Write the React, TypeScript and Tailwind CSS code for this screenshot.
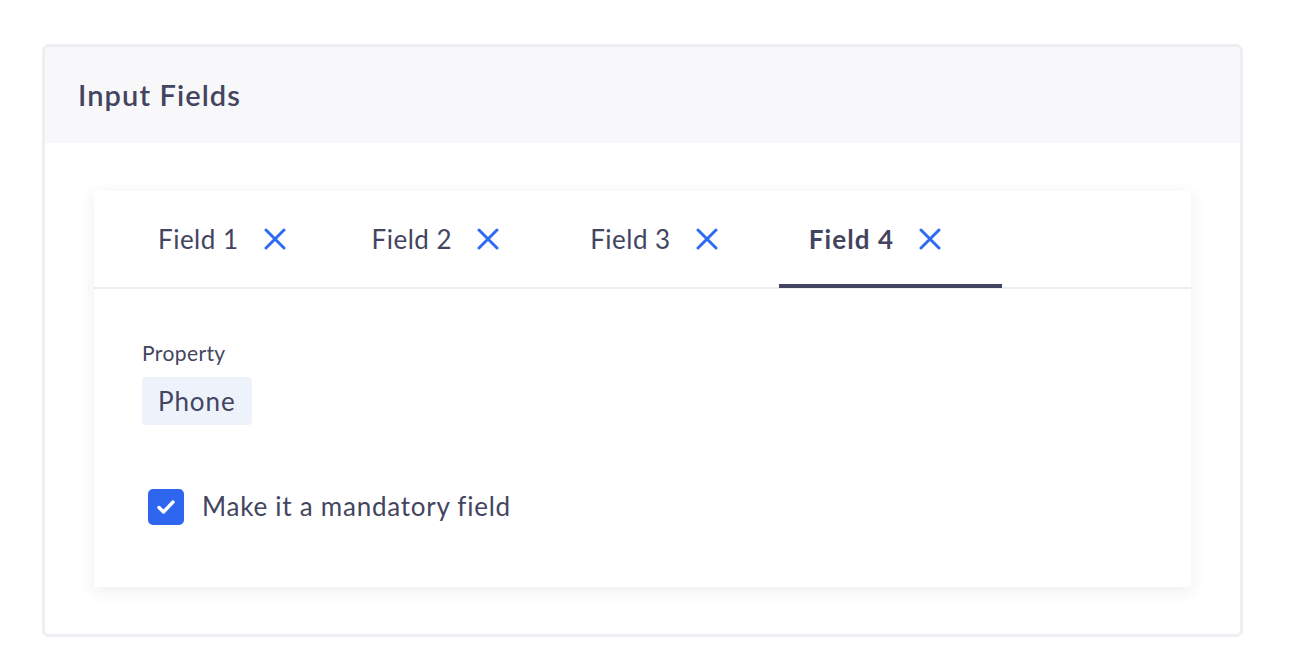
import React from 'react';

/* Input Fields — tabbed field editor card */

const tabs = ['Field 1', 'Field 2', 'Field 3', 'Field 4'];

function CloseIcon() {
  return (
    <svg width="22" height="22" viewBox="0 0 22 22" fill="none" className="shrink-0">
      <path d="M2 2L20 20M20 2L2 20" stroke="#2f6bf2" strokeWidth="3" strokeLinecap="round" />
    </svg>
  );
}

export default function App() {
  const active = 3;

  return (
    <div
      className="min-h-screen bg-white pt-[44px] pl-[42px]"
      style={{ fontFamily: 'Lato, "Open Sans", sans-serif' }}
    >
      <div className="w-[1201px] h-[593px] rounded-[7px] border-[3px] border-[#eeeff3] bg-white overflow-hidden">
        {/* header */}
        <div className="h-[96px] bg-[#f8f8fa] flex items-center pl-[33px]">
          <h1 className="text-[29px] font-semibold text-[#434560] tracking-[1.1px]">Input Fields</h1>
        </div>

        {/* body */}
        <div className="px-[49px] pt-[48px]">
          <div className="bg-white shadow-[0_4px_16px_rgba(40,42,70,0.08)]">
            {/* tabs */}
            <div className="flex pl-[34px] border-b-2 border-[#ebebf0] h-[98px]">
              {tabs.map((t, i) => (
                <div
                  key={t}
                  className={`relative flex items-center gap-[25px] pl-[30px] text-[26px] text-[#434560] ${
                    i === 0 ? 'pr-[56px]' : 'pr-[61px]'
                  } ${i === active ? 'font-bold tracking-[1.1px]' : 'font-normal tracking-[0.5px]'}`}
                >
                  <span>{t}</span>
                  <CloseIcon />
                  {i === active && (
                    <div className="absolute left-0 right-0 bottom-[-1px] h-[4px] bg-[#434560]" />
                  )}
                </div>
              ))}
            </div>

            {/* content */}
            <div className="px-[48px] pt-[53px] pb-[61px]">
              <div className="text-[21px] text-[#434560] leading-none tracking-[0.4px]">Property</div>
              <div className="mt-[14px] inline-flex items-center h-[48px] px-[16px] rounded-[4px] bg-[#eef2fb] text-[26px] text-[#434560] tracking-[0.9px]">
                Phone
              </div>
              <div className="mt-[62px] flex items-center gap-[18px] pl-[6px]">
                <div className="w-[36px] h-[36px] rounded-[5px] bg-[#2e66f0] flex items-center justify-center">
                  <svg width="22" height="18" viewBox="0 0 22 18" fill="none">
                    <path d="M4 9.5L8.5 14L18 4" stroke="white" strokeWidth="3.4" strokeLinecap="round" strokeLinejoin="round" />
                  </svg>
                </div>
                <span className="text-[26px] text-[#434560] tracking-[0.75px]">Make it a mandatory field</span>
              </div>
            </div>
          </div>
        </div>
      </div>
    </div>
  );
}
